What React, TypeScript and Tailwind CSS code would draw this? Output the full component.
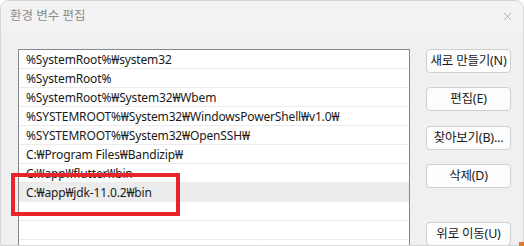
import { X } from "lucide-react";

const paths = [
  "%SystemRoot%₩system32",
  "%SystemRoot%",
  "%SystemRoot%₩System32₩Wbem",
  "%SYSTEMROOT%₩System32₩WindowsPowerShell₩v1.0₩",
  "%SYSTEMROOT%₩System32₩OpenSSH₩",
  "C:₩Program Files₩Bandizip₩",
  "C:₩app₩flutter₩bin",
  "C:₩app₩jdk-11.0.2₩bin",
  "",
  "",
  "",
];

const selectedIndex = 7;

const buttons = [
  { label: "새로 만들기(N)", mt: "mt-0" },
  { label: "편집(E)", mt: "mt-[14px]" },
  { label: "찾아보기(B)...", mt: "mt-[15px]" },
  { label: "삭제(D)", mt: "mt-[14px]" },
  { label: "위로 이동(U)", mt: "mt-[34px]" },
];

export default function App() {
  return (
    <div
      className="relative h-[246px] w-[524px] overflow-hidden bg-white"
      style={{ fontFamily: '"Noto Sans", "Noto Sans CJK KR", sans-serif' }}
    >
      <div className="h-full w-full overflow-hidden rounded-t-[8px] border border-[#d6d6d6] bg-[#f0f0f0]">
        <div className="flex h-[30px] items-center justify-between bg-[#f3f3f3] pl-[9px] pr-[9px]">
          <span className="text-[12.5px] text-[#8c8c8c]">환경 변수 편집</span>
          <X size={13} strokeWidth={1.2} className="text-[#8c8c8c]" />
        </div>

        <div className="flex pl-[17px] pt-[18px]">
          <div className="w-[392px] border border-[#828790] bg-white">
            {paths.map((path, i) => (
              <div
                key={i}
                className={`flex h-[19px] items-center border-b border-[#ececec] pl-[7px] pt-[2px] text-[12px] leading-none tracking-[-0.15px] text-[#1a1a1a] ${
                  i === selectedIndex ? "bg-[#ececec]" : ""
                }`}
              >
                {path}
              </div>
            ))}
          </div>

          <div className="ml-[16px] flex w-[85px] flex-col">
            {buttons.map((b) => (
              <button
                key={b.label}
                className={`${b.mt} h-[24px] rounded-[4px] border border-[#d0d0d0] bg-[#fdfdfd] pt-[1px] text-[12.5px] leading-none tracking-[-0.2px] text-[#1a1a1a]`}
              >
                {b.label}
              </button>
            ))}
          </div>
        </div>
      </div>

      <div className="absolute left-[11px] top-[173px] h-[43px] w-[169px] border-4 border-[#e8242b]" />
      <div className="absolute left-[519px] top-[242px] h-[6px] w-[6px] bg-[#e0782c]" />
    </div>
  );
}
